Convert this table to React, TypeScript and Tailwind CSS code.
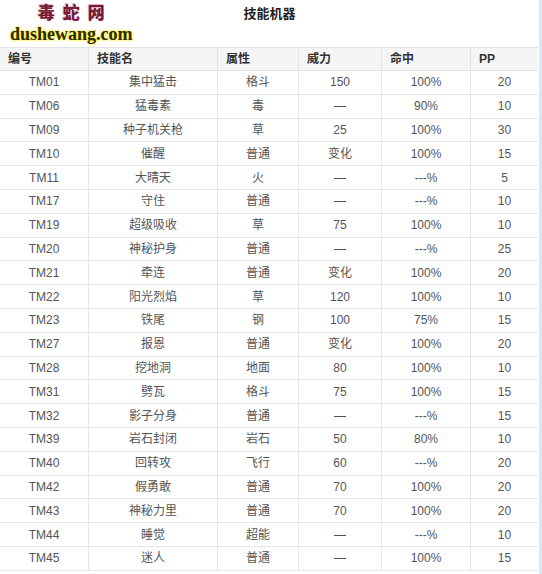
const rows: string[][] = [
  ["TM01", "集中猛击", "格斗", "150", "100%", "20"],
  ["TM06", "猛毒素", "毒", "—", "90%", "10"],
  ["TM09", "种子机关枪", "草", "25", "100%", "30"],
  ["TM10", "催醒", "普通", "变化", "100%", "15"],
  ["TM11", "大晴天", "火", "—", "---%", "5"],
  ["TM17", "守住", "普通", "—", "---%", "10"],
  ["TM19", "超级吸收", "草", "75", "100%", "10"],
  ["TM20", "神秘护身", "普通", "—", "---%", "25"],
  ["TM21", "牵连", "普通", "变化", "100%", "20"],
  ["TM22", "阳光烈焰", "草", "120", "100%", "10"],
  ["TM23", "铁尾", "钢", "100", "75%", "15"],
  ["TM27", "报恩", "普通", "变化", "100%", "20"],
  ["TM28", "挖地洞", "地面", "80", "100%", "10"],
  ["TM31", "劈瓦", "格斗", "75", "100%", "15"],
  ["TM32", "影子分身", "普通", "—", "---%", "15"],
  ["TM39", "岩石封闭", "岩石", "50", "80%", "10"],
  ["TM40", "回转攻", "飞行", "60", "---%", "20"],
  ["TM42", "假勇敢", "普通", "70", "100%", "20"],
  ["TM43", "神秘力里", "普通", "70", "100%", "20"],
  ["TM44", "睡觉", "超能", "—", "---%", "10"],
  ["TM45", "迷人", "普通", "—", "100%", "15"],
];

const headers = ["编号", "技能名", "属性", "威力", "命中", "PP"];

const grid = "grid grid-cols-[88px_129px_81px_83px_89px_68px]";

export default function App() {
  return (
    <div
      className="w-[542px] h-[574px] overflow-hidden bg-white border-r-[3px] border-[#dce8f2] relative"
      style={{ fontFamily: '"Liberation Sans", "Noto Sans CJK SC", sans-serif' }}
    >
      {/* watermark logo */}
      <div className="absolute left-[10px] top-0 flex flex-col items-center">
        <span
          className="text-[17px] leading-[24px] font-black text-[#7a1838] tracking-[8px] pl-[8px]"
          style={{ fontFamily: '"Noto Sans CJK SC", serif', textShadow: "1px 1px 0 #fff, -1px -1px 0 #d8b8c4" }}
        >
          毒蛇网
        </span>
        <span
          className="text-[18px] leading-[21px] font-bold text-[#2a2a10]"
          style={{ fontFamily: '"Liberation Serif", serif', textShadow: "0 0 3px #ffe600, 0 0 2px #fff200" }}
        >
          dushewang.com
        </span>
      </div>

      <div className="h-[47px] flex justify-center pt-[3px]">
        <span className="text-[13px] font-bold text-[#222]" style={{ fontFamily: '"Noto Sans CJK SC", sans-serif' }}>
          技能机器
        </span>
      </div>

      <div className="w-[538px]">
        <div className={`${grid} h-[24px] bg-[#f5f5f5] border-y border-[#e3e3e3]`}>
          {headers.map((h, i) => (
            <div
              key={h}
              className={`flex items-center pl-[8px] text-[12px] font-bold text-[#333] ${i > 0 ? "border-l border-[#e3e3e3]" : ""}`}
            >
              {h}
            </div>
          ))}
        </div>
        {rows.map((r) => (
          <div key={r[0]} className={`${grid} h-[23.8px] border-b border-[#e6e6e6]`}>
            {r.map((c, i) => (
              <div
                key={i}
                className={`flex items-center justify-center text-[12px] text-[#555] ${i > 0 ? "border-l border-[#e6e6e6]" : ""}`}
              >
                {c}
              </div>
            ))}
          </div>
        ))}
      </div>
    </div>
  );
}
